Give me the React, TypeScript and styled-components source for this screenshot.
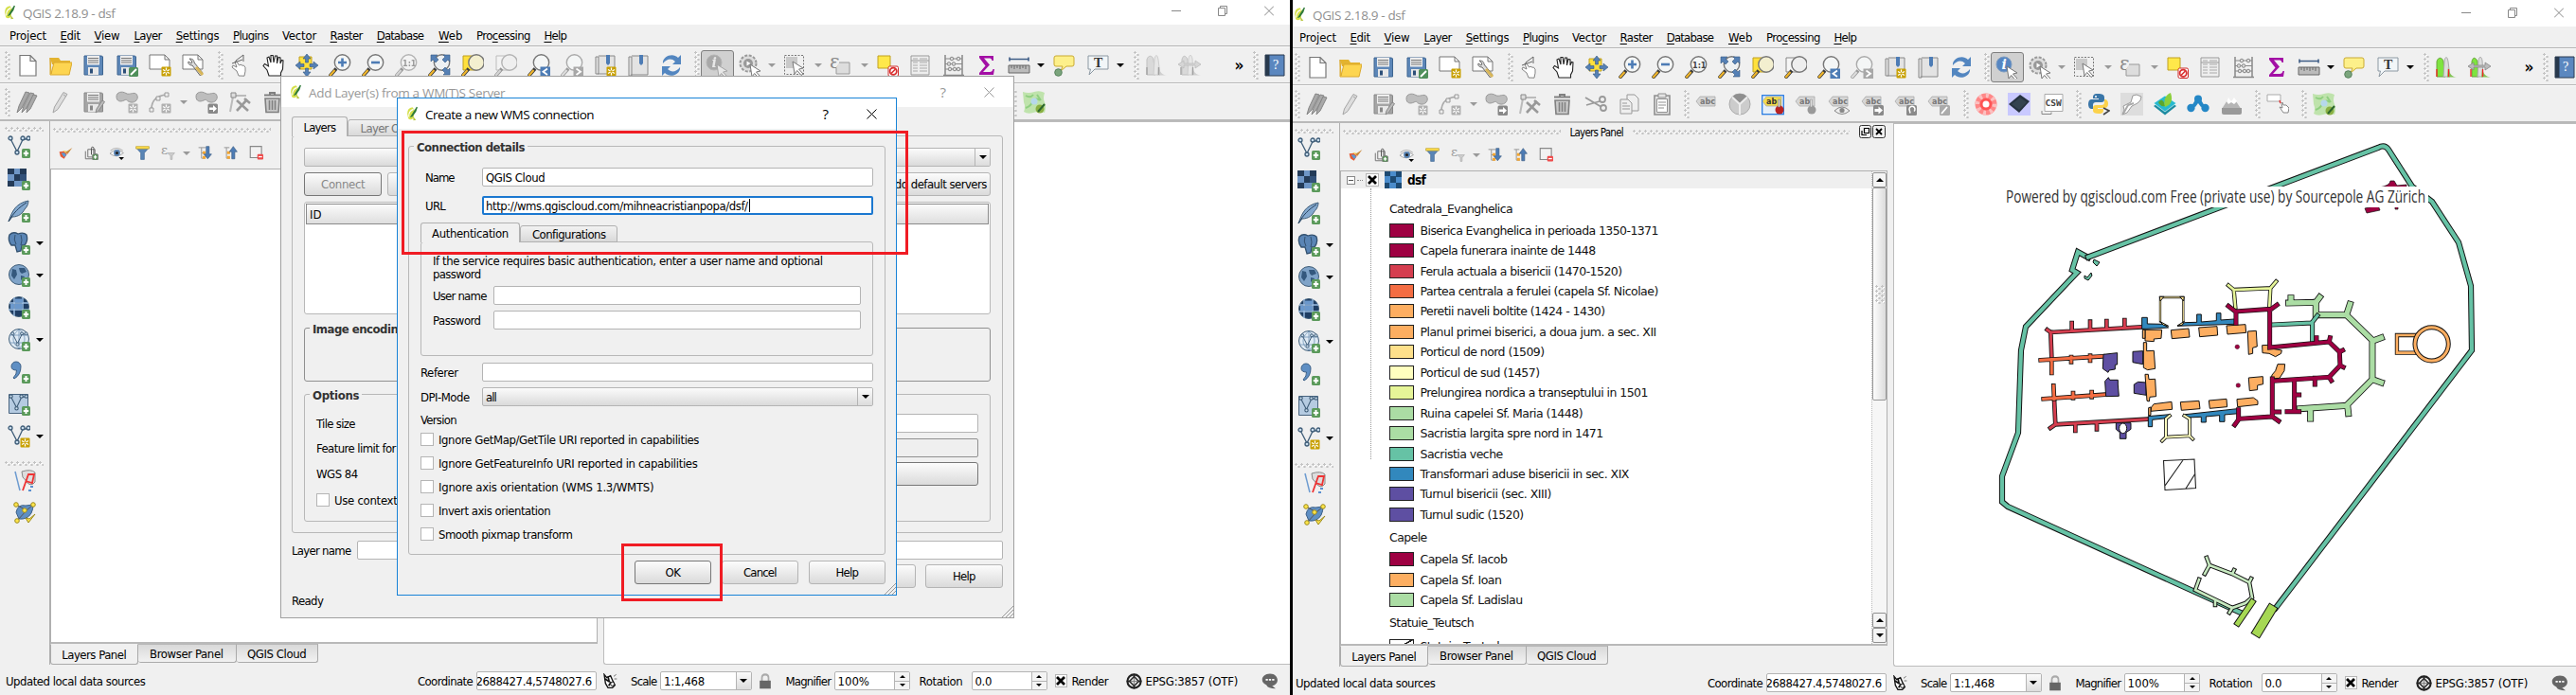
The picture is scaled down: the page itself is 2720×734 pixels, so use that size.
import React, { useLayoutEffect, useRef, useState } from "react";
import styled, { createGlobalStyle, css } from "styled-components";

const Global = createGlobalStyle`
  * { box-sizing: border-box; }
  html, body { margin: 0; padding: 0; background: #fff; overflow: hidden; }
  body { font-family: "DejaVu Sans Condensed", "DejaVu Sans", sans-serif; font-size: 13px; color: #000; line-height: 16px; }
  svg { display: block; flex: none; }
`;

/* ---------- text ---------- */
const TextBox = styled.span<{ $w: number; $size?: number; $bold?: boolean; $color?: string; $font?: string }>`
  display: inline-block;
  flex: none;
  width: ${(p) => p.$w}px;
  padding-top: 1px;
  white-space: pre;
  font-size: ${(p) => p.$size ?? 13}px;
  font-weight: ${(p) => (p.$bold ? 700 : 400)};
  color: ${(p) => p.$color ?? "inherit"};
  ${(p) => p.$font && css`font-family: ${p.$font};`}
`;
const Under = styled.u`
  text-underline-offset: 2px;
  text-decoration-thickness: 1px;
`;

type LabelProps = { w: number; text: string; size?: number; bold?: boolean; color?: string; font?: string };
/* Label with a fixed advance width; "&" marks the mnemonic letter. */
function Label({ w, text, size, bold, color, font }: LabelProps) {
  const ref = useRef<HTMLSpanElement>(null);
  const [spacing, setSpacing] = useState(0);
  const i = text.indexOf("&");
  const plain = text.replace("&", "");
  useLayoutEffect(() => {
    if (ref.current) setSpacing((w - ref.current.offsetWidth) / plain.length);
  }, [w, plain]);
  return (
    <TextBox $w={w} $size={size} $bold={bold} $color={color} $font={font}>
      <span ref={ref} style={{ letterSpacing: spacing }}>
        {i < 0 ? plain : (<>{text.slice(0, i)}<Under>{text[i + 1]}</Under>{text.slice(i + 2)}</>)}
      </span>
    </TextBox>
  );
}
const TITLE_FONT = '"Open Sans", "Noto Sans", sans-serif';

/* ---------- icons ---------- */
const Plus = ({ x = 15, y = 14 }: { x?: number; y?: number }) => (
  <g transform={`translate(${x} ${y})`}>
    <rect width="9" height="10" rx="1.5" fill="#5b9a5b" />
    <path d="M4.5 2v6M1.8 5h5.4" stroke="#fff" strokeWidth="2" />
  </g>
);
const Star = ({ c = "#c8a000" }: { c?: string }) => (
  <g>
    <rect x="13.5" y="13.5" width="10" height="10" rx="1" fill={c} />
    <path d="M18.500 14.500v8M15 16.500l7 4M22 16.500l-7 4" stroke="#fff" strokeWidth="1.300" />
    <circle cx="18.500" cy="18.500" r="1.200" fill={c} />
  </g>
);
const Lens = ({ grey, fill = "#f4f6f6", cx = 14.5, children }: { grey?: boolean; fill?: string; cx?: number; children?: React.ReactNode }) => (
  <g>
    <path d="M1 23.500L8 15.500" stroke={grey ? "#999" : "#3a3a3a"} strokeWidth="3.600" />
    <path d="M1.300 23L6.500 17" stroke={grey ? "#ddd" : "#f0b62c"} strokeWidth="2.200" />
    <circle cx={cx} cy="9" r="8.200" fill={fill} stroke={grey ? "#aaa" : "#777"} strokeWidth="1.400" />
    {children}
  </g>
);
const Cursor = ({ x = 12, y = 10 }: { x?: number; y?: number }) => (
  <path transform={`translate(${x} ${y})`} d="M0 0l11 7-4.500 1 4.500 5-2 1.500-4.300-5-2.700 3.500z" fill="#fff" stroke="#777" strokeWidth="1" />
);
const Tag = ({ text = "abc", color = "#d6d6d6", ink = "#777" }: { text?: string; color?: string; ink?: string }) => (
  <g>
    <path d="M1 9L5 4H21V14H5Z" fill={color} stroke="#aaa" strokeWidth=".8" />
    <text x="5" y="12" fontSize="8" fontWeight="700" fill={ink} fontFamily="DejaVu Sans">{text}</text>
  </g>
);
const Floppy = ({ g }: { g?: boolean }) => (
  <g>
    <path d="M2 2h18.500l1 1v19H2z" fill={g ? "#a5a5a5" : "#5d87b8"} stroke={g ? "#888" : "#3e6590"} />
    <rect x="5" y="2" width="13" height="9.500" fill="#eee" />
    <path d="M6 4.500h11M6 6.800h11M6 9h11" stroke="#777" strokeWidth="1" />
    <rect x="6" y="14" width="11" height="8" fill="#e8e8e8" /><rect x="8" y="15.500" width="3" height="5" fill={g ? "#888" : "#2d4f78"} />
  </g>
);
const VShape = () => (
  <g stroke="#3f5d78" strokeWidth="1.300" fill="#c9dcec">
    <path d="M3 3.500L10 17L16 4.500L21 3.500" fill="none" />
    <circle cx="3" cy="3" r="2" /><circle cx="10" cy="18" r="2" /><circle cx="16" cy="3" r="2" /><circle cx="22" cy="3" r="2" />
  </g>
);
const Blob = () => <path d="M1 6C1 1 7 0 11 2.500S20 0 22.500 4 21 13 16 12 13 8 9 10 1 11 1 6z" fill="#bdbdbd" stroke="#999" />;
const Hand = ({ thin }: { thin?: boolean }) => thin ? (
  <g fill="#fff" stroke="#777" strokeWidth=".9">
    <path d="M10 23l-2-5-5-4 1-2 4 2-2-6 1.500-.5 3 4.500 1.500-.8 2 1 1.500 0 1.500 2 0 4-1 5z" />
    <path d="M7 7l8-6v7M14 6l-11 4" fill="none" stroke="#555" />
  </g>
) : (
  <path d="M7 23L5 17 1 12.500l1.500-2L6.500 13 5 4l2-1 2 6L9 1.500h2.200L12 9l1.500-7h2v8L17 3.500l2 .5v6l1.500-3.500 1.500.5-.5 9-2 4v3z" fill="#fff" stroke="#222" strokeWidth="1.100" />
);
const Arrows = () => (
  <g fill="#5580b5" stroke="#36597f" strokeWidth=".6">
    <path d="M12 0l4 5h-2.500v4h-3V5H8z" /><path d="M12 24l4-5h-2.500v-4h-3v4H8z" />
    <path d="M0 12l5-4v2.500h4v3H5V16z" /><path d="M24 12l-5-4v2.500h-4v3h4V16z" />
  </g>
);
const Globe = ({ dark, light }: { dark?: boolean; light?: boolean }) => (
  <g>
    <circle cx="12" cy="11" r="10.500" fill={dark ? "#1f3d63" : light ? "#dfeaf4" : "#7fa3c8"} stroke="#3f5d78" />
    {dark ? <path d="M2 7h20M1 14h22M7 1v20M16 1v20" stroke="#9fc0e4" strokeWidth="1.400" /> : light ? (
      <path d="M2 7h20M2 15h20M12 1v20M12 1c-8 6-8 14 0 20M12 1c8 6 8 14 0 20" stroke="#6f93b5" strokeWidth=".8" fill="none" />
    ) : <path d="M5 5l4 1 1 5-3 5-3-4zM12 4l6 0 2 4-5 2-2-2zM14 12l4 1-2 5-2-2z" fill="#34587d" />}
    {dark && <path d="M8 2.500h8v4H8zM3 8h4v5H3zM8 8h7.500v5H8z" fill="#6b98cc" />}
  </g>
);

const ART: Record<string, React.ReactNode> = {
  doc: <path d="M4 1.500h11l6 6V23H4z M15 1.500v6h6" fill="#fff" stroke="#777" strokeWidth="1.200" />,
  open: <g><path d="M1 4h9l2 3h10v4H3z" fill="#e3b32f" /><path d="M1 4v18h20l3-13H5l-3 12z" fill="#fdd551" stroke="#dba92e" /></g>,
  save: <Floppy />,
  saveas: <g><Floppy /><rect x="14" y="14" width="10" height="10" rx="1.500" fill="#4f8f5a" /><path d="M16 22l6-6" stroke="#fff" strokeWidth="2" /></g>,
  composer: <g><path d="M1 1h16l5 5v10H1z M17 1v5h5" fill="#fff" stroke="#777" /><Star /></g>,
  manager: <g><path d="M1 1h16l5 5v10H1z M17 1v5h5" fill="#fff" stroke="#777" /><path d="M8 5c4 0 5 2 5 4l9 11-2.500 3L11 12c-3 0-5-2-4-4l3 2 1-2z" fill="#ddd" stroke="#666" /><path d="M15 14l7 8" stroke="#d9b75a" strokeWidth="3" /></g>,
  touch: <Hand thin />,
  pan: <Hand />,
  pansel: <g><path d="M4 3h13v13H4z" fill="#ffe03c" stroke="#c0a020" /><Arrows /></g>,
  zin: <Lens><path d="M14.500 4.500v9M10 9h9" stroke="#4d7cb5" strokeWidth="2.600" /></Lens>,
  zout: <Lens><path d="M10 9h9" stroke="#4d7cb5" strokeWidth="2.600" /></Lens>,
  z11: <Lens><text x="8" y="12.500" fontSize="9" fontWeight="700" fill="#444" fontFamily="DejaVu Sans Condensed">1:1</text></Lens>,
  zfull: <g><Lens fill="#eef1f3" /><path d="M3 1h7L8 3l3 3-3 3-3-3-2 2zM23 1h-7l2 2-3 3 3 3 3-3 2 2zM23 22v-7l-2 2-3-3-3 3 3 3-2 2z" fill="#5580b5" stroke="#36597f" strokeWidth=".6" /></g>,
  zsel: <g><path d="M2 2h13v15H2z" fill="#ffe03c" stroke="#c0a020" /><Lens fill="#f3efcf" cx={16} /></g>,
  zlay: <g><path d="M2 2h13v15H2z" fill="#f6f6f6" stroke="#888" /><Lens fill="#eee" cx={16} /></g>,
  zlast: <g><Lens /><path d="M13.500 13.500h10.500v10.500H13.500z" fill="#4d7cb5" /><path d="M21 15.500l-4.500 3.200 4.500 3.300" fill="none" stroke="#fff" strokeWidth="1.800" /></g>,
  znext: <g><Lens grey /><path d="M13.500 13.500h10.500v10.500H13.500z" fill="#a8a8a8" /><path d="M16.500 15.500l4.500 3.200-4.500 3.300" fill="none" stroke="#fff" strokeWidth="1.800" /></g>,
  book1: <g><path d="M2 3h3v18H2zM5 2h17v19H4" fill="#e3e3e3" stroke="#888" /><path d="M13 1h4v9l-2 2-2-2z" fill="#4d7cb5" /><Star /></g>,
  book2: <g><path d="M2 3h3v20H2zM5 2h17v20H4" fill="#e3e3e3" stroke="#888" /><path d="M13 1h4v9l-2 2-2-2z" fill="#4d7cb5" /></g>,
  refresh: <g fill="#5386c0"><path d="M3 10C2 3 13-2 19 4l3-3v10H13l3-3C12 4 7 5 3 10z" /><path d="M21 14c1 7-10 12-16 6l-3 3V13h9l-3 3c4 4 9 3 13-2z" /></g>,
  identify: <g><circle cx="9" cy="9" r="8" fill="#5686c2" stroke="#7d9cc0" /><text x="6.500" y="14" fontSize="14" fontStyle="italic" fontWeight="700" fill="#fff" fontFamily="DejaVu Serif">i</text><Cursor x={12} y={11} /></g>,
  gear: <g><circle cx="11" cy="10" r="8.500" fill="#ddd" stroke="#999" strokeWidth="2" strokeDasharray="3 1.500" /><circle cx="11" cy="10" r="5" fill="#999" /><path d="M9.500 7.500l4 2.500-4 2.500z" fill="#fff" /><Cursor x={13} y={11} /></g>,
  select: <g><path d="M1.500 1.500h20v20h-20z" fill="none" stroke="#777" strokeDasharray="2 1.500" /><path d="M3 3h12v12H3z" fill="#c9c9c9" /><Cursor x={10} y={8} /></g>,
  eps: <g><text x="0" y="15" fontSize="21" fill="#888" fontFamily="DejaVu Serif">ε</text><path d="M10 9h11v12H7v-6" fill="#ddd" stroke="#999" /></g>,
  desel: <g><path d="M2 2h13v13H2z" fill="#ffe84a" stroke="#c0a020" /><rect x="13" y="13" width="10.500" height="10.500" rx="1.500" fill="#fff" stroke="#cf2c2c" /><circle cx="18.200" cy="18.200" r="3.600" fill="#fff" stroke="#d93030" strokeWidth="1.800" /><path d="M16 20.500l4.500-4.500" stroke="#d93030" strokeWidth="1.600" /></g>,
  table: <g><path d="M2 2h19v20H2z" fill="#eee" stroke="#999" /><path d="M4 5h5M11 5h8M4 9h5M11 9h8M4 12h5M11 12h8M4 15h5M11 15h8M4 18h5M11 18h8" stroke="#aaa" strokeWidth="1.200" /><path d="M2 7h19" stroke="#999" /></g>,
  abacus: <g fill="#ddd" stroke="#888"><path d="M3 1v21M21 1v21M1 22.500h22" strokeWidth="1.500" /><path d="M3 5h18M3 10.500h18M3 16h18" /><circle cx="10" cy="5" r="1.800" /><circle cx="17" cy="5" r="1.800" /><circle cx="7" cy="10.500" r="1.800" /><circle cx="12" cy="10.500" r="1.800" /><circle cx="8" cy="16" r="1.800" /><circle cx="13" cy="16" r="1.800" /><circle cx="17" cy="16" r="1.800" /></g>,
  sigma: <path d="M4 2h15v5h-1.500C17 5 16 4.500 14 4.500H9l6 7-7 7.500h7c2 0 3-1 3.500-3H20l-1 6H4v-2l6.500-7.500L4 4z" fill="#a30fa5" />,
  ruler: <g><path d="M2 5.500h20M2 3.500v4M22 3.500v4" stroke="#3f5d86" strokeWidth="1.600" /><path d="M1 12h22v8H1z" fill="#bbb" stroke="#666" /><path d="M4 12v3M7 12v4M10 12v3M13 12v4M16 12v3M19 12v4" stroke="#666" /></g>,
  tip: <g><path d="M4 2h17q2 0 2 2v7q0 2-2 2h-6l-6 5 2-5H4q-2 0-2-2V4q0-2 2-2z" fill="#fdf08a" stroke="#c9aa32" /><circle cx="6.500" cy="19.500" r="3.800" fill="#7ba57d" stroke="#55805a" /></g>,
  text: <g><path d="M2 2h21v14H9l-6 6 1.500-6H2z" fill="#f2f6f8" stroke="#8c98a2" /><text x="8" y="14" fontSize="14" fill="#333" fontFamily="Liberation Serif" fontWeight="700">T</text></g>,
  hist: <g><path d="M2 22V6C3 1 8 1 9 6l2 16z" fill="#7ee43f" stroke="#6aa33e" /><path d="M9 22l1-16c1-6 3-6 4 0l2 16z" fill="#ddd" stroke="#aaa" /><path d="M14 12c1 6 3 10 9 10.500H13z" fill="#82c455" /><path d="M2 14v8M14.500 14v8" stroke="#f32222" strokeWidth="1.300" /></g>,
  hist2: <g><path d="M4 22V6C5 1 8 1 10 6l1 16z" fill="#7ee43f" stroke="#6aa33e" /><path d="M10 22l1-17c1-5 3-5 4 0l1 17z" fill="#ddd" stroke="#aaa" /><path d="M15 14c1 5 4 8 9 8.500H14z" fill="#82c455" /><path d="M3 14v8M15.500 14v8" stroke="#f32222" strokeWidth="1.300" /><path d="M0 11l6-4v3h12V7l6 4-6 4v-3H6v3z" fill="#bbb" stroke="#888" strokeWidth=".8" /></g>,
  help: <g><path d="M2 1h20v22H2z" fill="#5b87bf" stroke="#2a3b50" /><path d="M2 1h4.500v22H2z" fill="#28394d" /><text x="10" y="16" fontSize="14" fill="#fff" fontFamily="Liberation Serif">?</text></g>,
  pencils: <g fill="#a9a9a9" stroke="#858585"><path d="M1 23l2-7L10 1l4 1L6 18z" /><path d="M6 23l2-7 7-14 4 1-8 15z" /><path d="M11 23l1-6 6-13 4 1-7 14z" /></g>,
  pencil: <path d="M4 23l1.500-6L15 1.500l4 2L9 19.500z M15 4l3 2" fill="#ddd" stroke="#a5a5a5" />,
  esave: <g><Floppy g /><path d="M14 23l1-4 6-9 2.500 1.500-6 9z" fill="#bbb" stroke="#888" /></g>,
  addf: <g><Blob /><Star c="#b0b0b0" /></g>,
  curve: <g><path d="M3 19C3 9 9 5 19 4" fill="none" stroke="#aaa" strokeWidth="1.600" /><path d="M1 18h4v4H1zM8 6h4v4H8zM17 2h4v4h-4z" fill="#eee" stroke="#999" /><Star c="#b0b0b0" /></g>,
  movef: <g><Blob /><rect x="13.500" y="13.500" width="10.500" height="10.500" rx="1.500" fill="#888" /><path d="M15 17.500h4v-2.500l4 3.800-4 3.700V20h-4z" fill="#fff" /></g>,
  node: <g><path d="M4 5h15M5 6L2 22" stroke="#bbb" strokeWidth="2" /><path d="M3 2h5v5H3z" fill="#ddd" stroke="#888" /><path d="M9 10l12 11M20 9L9 21" stroke="#999" strokeWidth="2.600" /><path d="M17 8l6 5" stroke="#999" strokeWidth="2.500" /></g>,
  trash: <g fill="none" stroke="#808080"><path d="M4 8h15l-1 14.500H5z" fill="#c9c9c9" strokeWidth="1.600" /><path d="M3 4.500h17M9 4V2h5v2" strokeWidth="2" /><path d="M8.500 10v10M11.500 10v10M14.500 10v10" strokeWidth="1.600" /></g>,
  cut: <g fill="none" stroke="#999" strokeWidth="1.800"><path d="M1 5l17 10M2 13l14-4" /><circle cx="19" cy="7" r="3" /><circle cx="20" cy="16" r="3" /></g>,
  copy: <g fill="#efefef" stroke="#999"><path d="M10 2h8l4 4v13H10z" /><path d="M3 7h8l4 4v11H3z" /><path d="M5 11h5M5 14h8M5 17h8" /></g>,
  paste: <g fill="#e4e4e4" stroke="#8f8f8f"><path d="M4 3h16v20H4z" strokeWidth="1.600" /><path d="M8 1h8v4H8z" /><path d="M6.500 6.500h11v14h-11z" fill="#fff" /><path d="M8 10h8M8 13h8M8 16h6" /></g>,
  abc: <Tag />,
  pie: <g><circle cx="12" cy="12" r="11" fill="#ccc" stroke="#aaa" /><path d="M12 12L4 4.500A11 11 0 0 1 20 4.500z" fill="#8f8f8f" /><path d="M12 12v11M12 12L4 4.500M12 12l8-7.500" stroke="#eee" strokeWidth="2" /></g>,
  lab1: <g><rect x=".7" y="2.700" width="22.600" height="20" fill="#e5eef8" stroke="#1a73e0" strokeWidth="1.200" /><Tag text="ab" color="#f3dc4a" ink="#333" /><circle cx="19" cy="18" r="4.500" fill="#b92222" /><path d="M17.500 7h2v8h-2z" fill="#ddd" stroke="#777" strokeWidth=".6" /></g>,
  lab2: <g><Tag text="ab" /><circle cx="18" cy="18" r="4.500" fill="#999" /><path d="M16.500 7h2v8h-2z" fill="#ddd" stroke="#999" strokeWidth=".6" /></g>,
  lab3: <g><Tag /><path d="M7 19q8-8 16 0-8 7-16 0z" fill="#eee" stroke="#888" /><circle cx="15" cy="18.500" r="2.600" fill="#888" /></g>,
  lab4: <g><Tag /><rect x="13" y="13" width="11" height="11" rx="1.500" fill="#8a8a8a" /><path d="M14.500 17h4v-2.500l4.500 4-4.500 4V20h-4z" fill="#fff" /></g>,
  lab5: <g><Tag /><rect x="13" y="13" width="11" height="11" rx="1.500" fill="#8a8a8a" /><path d="M17 21.500l-1-4a3 3 0 1 1 5 2" fill="none" stroke="#fff" strokeWidth="1.500" /></g>,
  lab6: <g><Tag /><rect x="13" y="13" width="11" height="11" rx="1.500" fill="#aaa" /><path d="M15 22l6-7" stroke="#fff" strokeWidth="1.800" /></g>,
  ring: <g><circle cx="12" cy="12" r="8" fill="#fff" stroke="#f88" strokeWidth="7" /><circle cx="12" cy="12" r="9" fill="none" stroke="#fbc0c0" strokeWidth="5" strokeDasharray="3 4" /><circle cx="12" cy="12" r="5" fill="none" stroke="#f55" strokeWidth="3" /></g>,
  chip: <g><path d="M0 0h24v24H0z" fill="#c9c9ff" /><path d="M1 12L13 2l10 7-11 12z" fill="#26323f" /><path d="M4 12l9-7 7 5-8 8z" fill="#34434f" /></g>,
  csw: <g><path d="M4 1.500h19v18H4z" fill="#fff" stroke="#aaa" /><path d="M1 19v3.500h10v-2" fill="none" stroke="#888" /><text x="4.500" y="13.500" fontSize="9.500" fontWeight="700" fill="#444" fontFamily="DejaVu Sans Mono">CSW</text></g>,
  python: <g><path d="M11 1c-5 0-5 2-5 5h6v1H4c-4 0-4 10 0 10h2v-4c0-2 1-3 3-3h6c2 0 3-1 3-3V5c0-3-2-4-7-4z" fill="#3a76a8" /><path d="M12 22c5 0 5-2 5-5h-6v-1h8c4 0 4-9 0-9h-1v3c0 2-1 3-3 3H9c-2 0-3 1-3 3v3c0 2 2 3 6 3z" fill="#fcd24b" /><path d="M17 16l6 3-6 4" fill="none" stroke="#444" strokeWidth="1.600" /><circle cx="9" cy="4" r="1" fill="#fff" /></g>,
  grass: <g><path d="M0 0h24v24H0z" fill="#ddd" /><path d="M13 3l4-1 5 2-1 4-3 3-6 3-5 7-5 2 2-5-1-4 8-4z" fill="#fff" stroke="#999" /><path d="M3 22l5-9 6-2" fill="none" stroke="#aaa" strokeWidth="2" /></g>,
  leaf: <g><path d="M0 14l12-8 12 8-12 9.500z" fill="#1d8ba0" /><path d="M0 11L12 3l12 8-12 9z" fill="#27b9cf" stroke="#fff" strokeWidth=".6" /><path d="M5 10q5-6 7 4-5 1-7-4z" fill="#5ba62e" /><path d="M12 15Q9 4 18 0q4 12-6 15z" fill="#8ccf3c" /></g>,
  people: <g fill="#2487c6"><circle cx="12" cy="6.500" r="4" /><circle cx="4.500" cy="16" r="4.200" /><circle cx="19.500" cy="16" r="4.200" /><path d="M5 14l5-8h4l5 8-4 1-3-4-3 4z" /></g>,
  mount: <g><path d="M2 17L9 6l3 4 3-4 8 12v1H2z" fill="#b5b5b5" /><path d="M2 16h21v5q0 2-2 2H4q-2 0-2-2z" fill="#999" /><path d="M7 9l2-4 3 4 3-4 3 4-3 3-3-2-3 2z" fill="#fff" /></g>,
  recth: <g><path d="M1 2h14v7H1z" fill="#fff" stroke="#aaa" /><path d="M14 8l1 3" stroke="#d33" strokeWidth="1.500" /><path d="M16 11l1 5-3-1 4 6h5l1-5-3-3-3 0-1-3z" fill="#fff" stroke="#888" /></g>,
  cloud: <g><path d="M0 1q6 2 12 0t11 1q-2 6 0 10t0 11q-6-2-12 0T1 22q2-5 0-10z" fill="#bfe3ac" /><path d="M3 5q5 3 8-1M15 4l4 6M3 18q6-2 8-8 4-3 7 0" stroke="#8fcf80" fill="none" strokeWidth="2" /><circle cx="12" cy="11" r="3.500" fill="#b6d8ec" /><circle cx="18" cy="19" r="4.500" fill="#8ab043" /><path d="M16 22l7-8" stroke="#2c662c" strokeWidth="2" /></g>,
  vadd: <g><VShape /><Plus /></g>,
  radd: <g><path d="M0 1h20v19H0z" fill="#6f96c6" /><path d="M0 1h7v6H0zM13 1h7v6h-7zM7 7h6v7H7zM0 14h7v6H0z" fill="#243b58" /><path d="M13 7h7v7h-7z" fill="#34527a" /><Plus /></g>,
  feather: <g><path d="M1 23C5 12 8 4 22 1c0 5-3 8-4 9-2 4-6 8-13 8z" fill="#84a9cf" stroke="#3f5d78" /><path d="M1 23C6 14 12 8 20 3" stroke="#28425e" fill="none" /><Plus /></g>,
  pg: <g><path d="M2 3q4-4 9-1 6-2 9 1 2 6-2 11h-3l-1 6-4 1-2-7H4Q0 9 2 3z" fill="#5a85b5" stroke="#33516f" strokeWidth="1.300" /><path d="M8 3q-2 5 1 10M14 3q2 6 0 11" stroke="#33516f" fill="none" /><Plus y={14} /></g>,
  globe: <g><Globe /><Plus y={14} /></g>,
  globe2: <g><Globe dark /><Plus y={14} /></g>,
  globe3: <g><Globe light /><g transform="translate(3 3) scale(.75)"><VShape /></g><Plus y={14} /></g>,
  comma: <g><path d="M4 6a4.500 4.500 0 1 1 10 0q0 9-7 13l-1-1q4-4 3.500-8Q4 10 4 6z" fill="#5f8fc4" stroke="#3c6087" /><Plus /></g>,
  vbox: <g><path d="M1.500 1.500h20v20h-20z" fill="#b5cbe1" stroke="#48637e" /><g transform="translate(1 1) scale(.85)"><VShape /></g><Plus /></g>,
  vstar: <g><VShape /><Star /></g>,
  topo: <g fill="none"><path d="M2 2l5 20" stroke="#6d9bd0" strokeWidth="1.500" /><path d="M9 2q10-3 14 1v10q-4 5-8 1-2-3-5-6z" fill="#ddd" stroke="#888" /><path d="M10 22l6-17 6 0-2 9-7-2" stroke="#e33" strokeWidth="1.800" /><path d="M16 22h3M18 18h3" stroke="#5a8fd0" strokeWidth="2" /></g>,
  geom: <g><path d="M3 11q2-9 10-7l8-1q0 5-2 9-4 7-13 6z" fill="#5f8fc4" stroke="#3c6087" /><path d="M4 20L14 9 21 3M3 3l11 6" stroke="#555" fill="none" /><g fill="#ffe54a" stroke="#9b8b20"><circle cx="3" cy="3" r="2.300" /><circle cx="21" cy="3" r="2.300" /><circle cx="12" cy="9" r="2.300" /><circle cx="4" cy="20" r="2.300" /><path d="M13 17l3 5 7-9-6 5z" /></g></g>,
  brush: <g><path d="M1 10l8-1 5 5-5 8-6-4z" fill="#e8582f" /><path d="M4 12l6 0 3 4-4 3z" fill="#5b9bd5" /><path d="M7 8l5 4 2-3z" fill="#f7d24a" /><path d="M11 11l4 3 8-11z" fill="#c98a3d" /></g>,
  group: <g fill="none" stroke="#777" strokeWidth="1.600"><path d="M2 9v13h12M6 6v13h12V6z" /><path d="M12 15V4a2 2 0 0 1 4 0v9" stroke="#555" /><Plus x={14} y={14} /></g>,
  eye: <g><path d="M0 13Q11 2 23 12 11 22 0 13z" fill="#fff" stroke="#999" strokeWidth="1.400" /><circle cx="12" cy="12" r="5.500" fill="#5a85b5" /><circle cx="12" cy="12" r="2.500" fill="#222" /><path d="M1 8Q11 0 22 8" fill="none" stroke="#888" /><path d="M15 19h9l-4.500 5z" fill="#000" /></g>,
  funnel: <g><path d="M1 3h22l-8 9v11H9V12z" fill="#5a85b5" stroke="#3f6590" /><path d="M1 1h22v4H1z" fill="#ffdf4a" stroke="#bca030" /></g>,
  epsf: <g><text x="0" y="14" fontSize="22" fill="#999" fontFamily="DejaVu Serif">ε</text><path d="M11 12h12l-4 5v6h-3v-6z" fill="#ccc" stroke="#aaa" /></g>,
  down: <g><path d="M1 3h12M6 3v18h6M6 12h5" stroke="#999" strokeWidth="1.600" fill="none" /><path d="M8 9h5v5H8zM8 17h5v5H8z" fill="#f5a732" /><path d="M14 1h5v13h4l-6.500 8L10 14h4z" fill="#4d7cb5" stroke="#36597f" /></g>,
  up: <g><path d="M1 3h9M5 3v18h6M6 12h5" stroke="#999" strokeWidth="1.600" fill="none" /><path d="M6 9h5v5H6zM6 17h5v5H6z" fill="#f5a732" /><path d="M14 22h5V10h4l-6.500-9L10 10h4z" fill="#4d7cb5" stroke="#36597f" /></g>,
  remove: <g><path d="M2 1h19v19H2z" fill="#f2f2f2" stroke="#888" strokeWidth="1.800" /><rect x="14" y="14" width="10" height="9" rx="1.500" fill="#ee4b4b" /><path d="M16 18.500h6" stroke="#fff" strokeWidth="2" /></g>,
  logo: <g><path d="M2 12Q2 3 12 2l4 4-2 13q-6 4-10 1z" fill="#d5e04a" /><path d="M5 17Q4 8 14 5" stroke="#fff" fill="none" strokeWidth="2" /><path d="M7 18L20 1l2 1-3 7-7 8z" fill="#2f7a3a" /><path d="M13 16l6 6-5 1z" fill="#b9c640" /></g>,
  mouse: <g><path d="M3 2l4 5 6-3 4 9 3 6-4 4H9L5 16z" fill="#fff" stroke="#111" strokeWidth="2" /><path d="M4 9l8 5M9 5l2 9M14 14l-4 6" stroke="#111" strokeWidth="2.600" /><circle cx="16" cy="17" r="3" fill="#fff" stroke="#111" strokeWidth="1.500" /><path d="M18 5l4-3M19 9h4" stroke="#333" /></g>,
  lock: <g><path d="M6 12V7q0-5 6-5t6 5v5" fill="none" stroke="#aaa" strokeWidth="3" /><path d="M2 11h20v12H2z" fill="#666" /></g>,
  crs: <g fill="none" stroke="#222"><circle cx="12" cy="12" r="10" strokeWidth="3" /><path d="M12 1v6M12 17v6M1 12h6M17 12h6" strokeWidth="2" /><path d="M12 5l7 7-7 7-7-7z" fill="#ddd" strokeWidth="2" /><path d="M12 7v10M7 12h10" stroke="#777" strokeWidth="1.200" /></g>,
  chat: <g><path d="M12 2c13 0 14 16 3 17l5 4Q9 23 7 18C-3 14 0 2 12 2z" fill="#666" /><path d="M6 10.500h3M10.500 10.500h3M15 10.500h3" stroke="#fff" strokeWidth="2.500" /></g>,
};

const IconSvg = styled.svg<{ $off?: boolean }>`
  ${(p) => p.$off && css`filter: grayscale(1) opacity(0.5);`}
`;
const Icon = ({ name, size = 24, h, off }: { name: string; size?: number; h?: number; off?: boolean }) => (
  <IconSvg width={size} height={h ?? size} viewBox="0 0 24 24" preserveAspectRatio="none" $off={off}>{ART[name]}</IconSvg>
);
const Caret = styled.i<{ $c?: string; $s?: number; $up?: boolean }>`
  width: 0;
  height: 0;
  border: ${(p) => p.$s ?? 4.5}px solid transparent;
  ${(p) => p.$up
    ? css`border-bottom-color: #000; border-top-width: 0;`
    : css`border-top-color: ${p.$c ?? "#000"}; border-bottom-width: 0;`}
`;

/* ---------- window frame ---------- */
const Screen = styled.main`display: flex; width: 2720px; height: 734px; overflow: hidden;`;
const Half = styled.section<{ $right?: boolean }>`
  position: relative;
  width: ${(p) => (p.$right ? 1358 : 1362)}px;
  height: 734px;
  overflow: hidden;
  background: #fff;
  ${(p) => p.$right && css`border-left: 3px solid #000; padding-top: 2px;`}
`;
const Win = styled.div<{ $right?: boolean }>`
  width: 1362px;
  height: 734px;
  margin-left: ${(p) => (p.$right ? -3 : 0)}px;
  display: flex;
  flex-direction: column;
  background: #f0f0f0;
`;
const TitleBar = styled.header`
  height: 26px;
  flex: none;
  display: flex;
  align-items: center;
  gap: 7px;
  padding: 0 17px 0 4px;
  background: #fff;
`;
const Push = styled.div`flex: 1;`;
const Controls = styled.div<{ $gap: number; $up?: number }>`
  display: flex;
  gap: ${(p) => p.$gap}px;
  align-items: center;
  padding-bottom: ${(p) => p.$up ?? 0}px;
`;
const MenuBar = styled.nav`
  height: 23px;
  flex: none;
  display: flex;
  align-items: center;
  padding: 0 0 0 10px;
  border-bottom: 1px solid #b4b4b4;
`;
const MenuItem = styled.span<{ $slot: number }>`width: ${(p) => p.$slot}px; flex: none;`;
const ToolRow = styled.div<{ $last?: boolean }>`
  height: ${(p) => (p.$last ? 40 : 39)}px;
  flex: none;
  display: flex;
  align-items: center;
  border-top: 1px solid #fafafa;
  border-bottom: ${(p) => (p.$last ? 2 : 1)}px solid #b9b9b9;
`;
const Slot = styled.span<{ $w: number; $active?: boolean; $end?: boolean }>`
  width: ${(p) => p.$w}px;
  height: 32px;
  flex: none;
  display: flex;
  align-items: center;
  justify-content: ${(p) => (p.$end ? "flex-end" : "center")};
  ${(p) => p.$active && css`background: #d0d0d0; border: 1px solid #7e7e7e; border-radius: 3px;`}
`;
const dots = css`
  background-image: radial-gradient(circle at 1.5px 1.5px, #c3c3c3 1px, transparent 1.3px),
    radial-gradient(circle at 2.5px 2.5px, #fff 1px, transparent 1.3px),
    radial-gradient(circle at 4.5px 4px, #c3c3c3 1px, transparent 1.3px);
  background-size: 6px 5px;
`;
const Grip = styled.i`width: 6px; height: 30px; margin-right: 1px; ${dots}`;
const GripBar = styled.i<{ $w?: number; $h?: number }>`
  display: block;
  height: ${(p) => p.$h ?? 5}px;
  ${(p) => (p.$w ? css`width: ${p.$w}px;` : css`flex: 1;`)}
  ${dots}
`;
const More = styled.span`font-size: 17px; font-weight: 700; line-height: 20px;`;

const MENU: [string, number, number][] = [
  ["Pro&ject", 39, 53.5], ["&Edit", 21.5, 36], ["&View", 27, 42], ["&Layer", 29.5, 44.2], ["&Settings", 45.5, 60.3],
  ["&Plugins", 37.5, 52], ["Vect&or", 36, 50.6], ["&Raster", 34.500, 49.2], ["&Database", 49.5, 65.2], ["&Web", 25, 40], ["Pro&cessing", 56.5, 71.5], ["&Help", 24, 30],
];
type Tool = [string, number];
const ROW1: Tool[] = [
  ["|", 11.5], ["doc", 35], ["open", 35], ["save", 35], ["saveas", 35], ["composer", 35], ["manager", 35], ["|", 15],
  ["touch", 35], ["pan", 35], ["pansel", 35], ["zin", 35], ["zout", 35], ["z11", 35], ["zfull", 35], ["zsel", 35], ["zlay", 35],
  ["zlast", 35], ["znext", 35], ["book1", 35], ["book2", 35], ["refresh", 35], ["|", 13], ["identify", 35], ["gear", 33], ["-", 14],
  ["select", 35], ["-", 14], ["eps", 35], ["-", 14], ["desel", 35], ["table", 35], ["abacus", 35], ["sigma", 35], ["ruler", 33], ["v", 13],
  ["tip", 35], ["text", 36], ["v", 12], ["|", 15], ["hist", 35], ["hist2", 35], [" ", 25], [">>", 20], ["|", 11], ["help", 33],
];
const ROW2: Tool[] = [
  ["|", 11.5], ["pencils", 35], ["pencil", 35], ["esave", 35], ["addf", 35], ["curve", 35], ["-", 14], ["movef", 35], ["node", 35],
  ["trash", 35], ["cut", 35], ["copy", 35], ["paste", 35], ["|", 12], ["abc", 35], ["pie", 35], ["lab1", 35], ["lab2", 35], ["lab3", 35],
  ["lab4", 35], ["lab5", 35], ["lab6", 35], ["|", 15], ["ring", 35], ["chip", 35], ["csw", 35], ["|", 14], ["python", 35], ["grass", 35],
  ["leaf", 35], ["people", 35], ["mount", 35], ["|", 14], ["recth", 35], ["|", 14], ["cloud", 35],
];
const renderTools = (tools: Tool[], off: string[]) =>
  tools.map(([n, w], i) => (
    <Slot key={i} $w={w} $active={n === "identify"} $end={n === "|"}>
      {n === "|" ? <Grip /> : n === "-" ? <Caret $c="#999" /> : n === "v" ? <Caret /> : n === ">>" ? <More>»</More> : n === " " ? null : (
        <Icon name={n} off={off.includes(n)} />
      )}
    </Slot>
  ));

const Body = styled.div`display: flex; height: 574px; flex: none;`;
const SideBar = styled.aside`width: 53px; border-right: 1px solid #b0b0b0; padding-top: 5px;`;
const SideItem = styled.div<{ $in?: boolean; $h?: number }>`
  display: flex;
  align-items: center;
  height: ${(p) => p.$h ?? 34}px;
  padding-left: ${(p) => (p.$in ? 14 : 8)}px;
  gap: 6px;
`;
const SideGrip = styled.div`padding: 1px 0 0 5px; height: 5px;`;
const Dock = styled.div`width: 578px; display: flex; flex-direction: column;`;
const DockHead = styled.div`height: 17px; display: flex; align-items: center; gap: 10px; padding: 1px 2px 0 3px;`;
const DockBtns = styled.div`display: flex; gap: 1px;`;
const DockTools = styled.div`height: 33px; display: flex; align-items: center; padding-left: 2.5px;`;
const Tree = styled.div`
  height: 502px;
  border: 1px solid #b0b0b0;
  border-bottom: 2px solid #b9b9b9;
  background: #fff;
  display: flex;
  overflow: hidden;
`;
const TreeMain = styled.div`flex: 1; overflow: hidden;`;
const LayerRow = styled.div`height: 18px; background: #efefef; display: flex; align-items: center; padding-left: 6px;`;
const Expander = styled.i`
  width: 9px; height: 9px; border: 1px solid #888; background: linear-gradient(#555, #555) center / 5px 1px no-repeat #fff;
`;
const Dash = styled.i`width: 6px; margin: 0 3px 0 2px; border-top: 1px dotted #888;`;
const Check = styled.span<{ $size?: number }>`
  width: ${(p) => p.$size ?? 14}px;
  height: 14px;
  flex: none;
  border: 1px solid #b5b5b5;
  background: #fff;
  display: grid;
  place-items: center;
`;
const Cross = () => (<svg width="10" height="10" viewBox="0 0 10 10"><path d="M1 1l8 8M9 1L1 9" stroke="#000" strokeWidth="2.800" /></svg>);
const Legend = styled.div`
  margin-left: 31px;
  border-left: 1px dotted #999;
  height: 286px;
  padding-left: 19px;
`;
const GroupName = styled.div<{ $t: number }>`height: 16px; margin-top: ${(p) => p.$t}px; white-space: nowrap;`;
const LegendRow = styled.div`
  height: 21.450px;
  display: flex;
  align-items: center;
  gap: 7px;
  white-space: nowrap;
`;
const Swatch = styled.i<{ $c: string }>`width: 25.500px; height: 15px; flex: none; border: 1px solid #222; background: ${(p) => p.$c};`;
const Entries = styled.div<{ $t: number }>`margin-top: ${(p) => p.$t}px;`;
const ScrollBar = styled.div`width: 16px; display: flex; flex-direction: column; background: #f6f6f6; border-left: 1px dotted #bbb; padding: 1px 0;`;
const ScrollBtn = styled.span`height: 16px; border: 1px solid #909090; border-radius: 2px; background: #f4f4f4; display: grid; place-items: center;`;
const Thumb = styled.span`
  height: 225px; border: 1px solid #999; border-radius: 2px; background: linear-gradient(90deg, #fdfdfd, #dcdcdc);
  display: grid; place-items: center;
`;
const Tabs = styled.div`display: flex; align-items: flex-start; height: 22px;`;
const DockTab = styled.span<{ $w: number; $on?: boolean }>`
  width: ${(p) => p.$w}px;
  height: ${(p) => (p.$on ? 22 : 20)}px;
  padding-top: 1px;
  display: flex;
  align-items: center;
  justify-content: center;
  border: 1px solid #aaa;
  border-top: ${(p) => (p.$on ? "1px solid #f0f0f0" : "1px solid #b9b9b9")};
  border-left-width: ${(p) => (p.$on ? 1 : 0)}px;
  border-radius: 0 0 3px 3px;
  background: ${(p) => (p.$on ? "#f0f0f0" : "linear-gradient(#d9d9d9, #f2f2f2)")};
`;
const Canvas = styled.div`
  margin-left: 6px;
  flex: 1;
  background: #fff;
  border: 1px solid #bcbcbc;
  border-right: 0;
  border-radius: 0 0 0 3px;
  overflow: hidden;
`;
const StatusBar = styled.footer`height: 32px; flex: none; display: flex; align-items: center; padding: 2px 0 0 6px;`;
const Gap = styled.i<{ $w: number }>`width: ${(p) => p.$w}px; flex: none;`;
const Input = styled.div<{ $w?: number; $focus?: boolean; $dis?: boolean; $pl?: number; $end?: boolean }>`
  height: 20px;
  ${(p) => (p.$w ? css`width: ${p.$w}px; flex: none;` : css`flex: 1;`)}
  display: flex;
  align-items: center;
  overflow: hidden;
  padding-left: ${(p) => p.$pl ?? 3}px;
  ${(p) => p.$end && css`justify-content: flex-end; padding-right: 4px;`}
  border: ${(p) => (p.$focus ? "2px solid #1b78d0" : p.$dis ? "1px solid #909090" : "1px solid #b4b4b4")};
  border-radius: 2px;
  background: ${(p) => (p.$dis ? "#efefef" : "#fff")};
`;
const Combo = styled(Input)<{ $grad?: boolean }>`
  justify-content: space-between;
  ${(p) => p.$grad && css`background: linear-gradient(#fbfbfb, #dadada);`}
`;
const ComboEnd = styled.span`
  width: 16px;
  height: 100%;
  border-left: 1px solid #b4b4b4;
  background: linear-gradient(#fbfbfb, #dcdcdc);
  display: grid;
  place-items: center;
`;
const SpinEnd = styled(ComboEnd)`
  background: linear-gradient(#f4f4f4 0 9px, #b4b4b4 9px 10px, #f4f4f4 10px);
`;

const LEGEND: [string, string, number][] = [
  ["#9e0142", "Biserica Evanghelica in perioada 1350-1371", 251.5],
  ["#9e0142", "Capela funerara inainte de 1448", 185],
  ["#d53e4f", "Ferula actuala a bisericii (1470-1520)", 213],
  ["#f46d43", "Partea centrala a ferulei (capela Sf. Nicolae)", 251],
  ["#fdae61", "Peretii naveli boltite (1424 - 1430)", 195.5],
  ["#fdae61", "Planul primei biserici, a doua jum. a sec. XII", 249],
  ["#fee08b", "Porticul de nord (1509)", 131],
  ["#ffffbf", "Porticul de sud (1457)", 126],
  ["#e6f598", "Prelungirea nordica a transeptului in 1501", 240],
  ["#abdda4", "Ruina capelei Sf. Maria (1448)", 171],
  ["#abdda4", "Sacristia largita spre nord in 1471", 193],
  ["#66c2a5", "Sacristia veche", 87],
  ["#3288bd", "Transformari aduse bisericii in sec. XIX", 220],
  ["#5e4fa2", "Turnul bisericii (sec. XIII)", 138],
  ["#5e4fa2", "Turnul sudic (1520)", 109],
];
const LEGEND2: [string, string, number][] = [
  ["#9e0142", "Capela Sf. Iacob", 91.5], ["#fdae61", "Capela Sf. Ioan", 85.5], ["#abdda4", "Capela Sf. Ladislau", 108],
];
const SANS = '"DejaVu Sans", sans-serif';
const renderLegend = (rows: [string, string, number][]) =>
  rows.map(([c, t, w]) => (<LegendRow key={t}><Swatch $c={c} /><Label w={w} text={t} font={SANS} size={12.5} color="#111" /></LegendRow>));

const LayerTree = () => (
  <>
    <TreeMain>
      <LayerRow>
        <Expander /><Dash /><Check><Cross /></Check><Gap $w={6} />
        <svg width="18" height="18" viewBox="0 0 18 18"><path d="M0 0h18v18H0z" fill="#4b8ccb" /><path d="M0 0h6v5H0zM12 0h6v6h-6zM6 5h6v7H6zM0 12h5v6H0zM12 12h6v6h-6z" fill="#1d4a72" /></svg>
        <Gap $w={6} /><Under><Label w={19} text="dsf" bold size={13.5} /></Under>
      </LayerRow>
      <Legend>
        <GroupName $t={0} />
        <GroupName $t={-3}><Label w={130} text="Catedrala_Evanghelica" font={SANS} size={12.5} color="#111" /></GroupName>
        <Entries $t={4.5}>{renderLegend(LEGEND)}</Entries>
        <GroupName $t={5}><Label w={39.5} text="Capele" font={SANS} size={12.5} color="#111" /></GroupName>
        <Entries $t={5}>{renderLegend(LEGEND2)}</Entries>
        <GroupName $t={5}><Label w={89} text="Statuie_Teutsch" font={SANS} size={12.5} color="#111" /></GroupName>
        <Entries $t={6}>{renderLegend([["linear-gradient(150deg, #fff 45%, #222 46% 52%, #fff 53%)", "Statuie_Teutsch", 88]])}</Entries>
      </Legend>
    </TreeMain>
    <ScrollBar>
      <ScrollBtn><Caret $up $s={4} /></ScrollBtn>
      <Thumb><GripBar $w={10} $h={20} /></Thumb>
      <Push />
      <ScrollBtn><Caret $up $s={4} /></ScrollBtn>
      <ScrollBtn><Caret $s={4} /></ScrollBtn>
    </ScrollBar>
  </>
);

/* ---------- map ---------- */
const Wall = ({ d, c, w = 12, o = 5 }: { d: string; c: string; w?: number; o?: number }) => (
  <g fill="none" strokeLinejoin="miter">
    <path d={d} stroke="#111" strokeWidth={w + o} strokeLinecap="square" />
    <path d={d} stroke={c} strokeWidth={w} strokeLinecap="square" />
  </g>
);
const ORANGE_BLOCKS = [
  "462,205 515,205 513,232 490,234 490,242 462,240", "544,206 600,201 603,228 547,233", "632,198 690,194 692,222 635,227",
  "720,192 780,188 782,214 723,219", "787,210 814,208 817,258 803,262 803,280 790,283", "833,254 856,253 860,264 895,270 893,280 875,290 855,280 834,278",
  "457,245 467,245 467,272 490,271 494,328 470,332 457,325", "462,346 472,346 474,362 494,361 497,416 477,418 475,432 468,430",
  "882,314 905,314 903,335 888,358 862,360 864,348 875,335", "790,357 835,353 836,377 818,381 818,395 793,398",
  "482,450 490,440 546,433 548,457 480,463", "574,434 633,430 636,455 577,460", "664,429 720,424 722,449 667,454",
  "753,425 805,420 819,430 819,442 755,449", "454,205 462,205 462,232 454,232", "473,452 480,450 480,475 473,477",
];
const CityMap = () => (
  <svg width="721" height="574" viewBox="1999 131 721 574">
    <Wall c="#66c2a5" w={4.2} o={2} d="M2204 272L2193 266L2187 285L2192 288L2138 345L2133 370L2130 457L2113 503V530L2119 535L2367 648" />
    <Wall c="#66c2a5" w={4.2} o={2} d="M2204 271.500L2510 156Q2517 152 2521 158L2546 197L2567 213L2595 256L2608 302L2609 370L2402 642" />
    <path d="M2210 274l6 3-3 4-4-4zM2200 291l3 2 4-5 1 3-4 5-4-2z" fill="#66c2a5" stroke="#111" />
    <path d="M2511 198q12-2 12-7h4l3 5 10-1v8h-30zM2496 220l14-3 2 5-14 3zM2528 218h3v3h-3z" fill="#9e0142" stroke="#111" strokeWidth=".7" />
    <g transform="translate(2110 280) scale(.3333)">
      <Wall c="#d53e4f" w={9} d="M152 205L163 213L453 196M230 183V205M288 179V202M340 177V200M397 174V197M163 213L166 292" />
      <Wall c="#d53e4f" w={9} d="M162 516L178 505L470 488M174 425L178 505M241 508V525M309 504V520" />
      <Wall c="#f46d43" w={9} d="M131 301L328 289M166 301V342M140 424L336 410M172 382L174 424M228 291V307M288 287V303M234 405V421M293 402V418" />
      <g fill="#5e4fa2" stroke="#111" strokeWidth="3">
        <path d="M330 283L374 278V315L367 316V330L348 333L345 340L328 328ZM335 368L346 356L350 364L376 364V378L379 415L338 416ZM423 274L455 272V314L423 308ZM427 378L440 370L465 372V412L427 406Z" />
        <path d="M370 500H417V520L402 530V550H382V530L370 520Z" /><ellipse cx="392" cy="517" rx="12" ry="16" fill="#fff" />
      </g>
      <g fill="#3288bd" stroke="#111" strokeWidth="3">
        <path d="M452 166H469V186L520 187L536 198L468 202H452ZM588 182L626 181V156H640V180L688 176V152H702V174L745 171V187L565 193Z" />
        <path d="M472 479L541 473L522 486L485 490V512H472ZM582 474L755 455L760 470L714 474V496H698V476L655 480V498H640V481L600 483Z" />
      </g>
      <Wall c="#fdeaa0" w={3} o={4} d="M510 178V102H583V178" />
      <path d="M508 178L536 193 520 190ZM586 178L564 192 580 190ZM508 100h14l-12 14zM586 100h-14l12 14z" fill="#fee08b" stroke="#111" strokeWidth="3" />
      <Wall c="#ffffbf" w={6} d="M540 477L528 487V545L603 541V487L586 477M516 557L528 545M613 551L603 541" />
      {ORANGE_BLOCKS.map((p) => <polygon key={p} points={p} fill="#fdae61" stroke="#111" strokeWidth="3" />)}
      <Wall c="#e6f598" w={8} d="M726 64L743 78L748 134M743 78L859 73L856 130M859 73L877 52" />
      <Wall c="#abdda4" w={16} d="M917 120L1003 118L1015 102M924 104V118M1003 118V158L1100 158L1111 124M1100 158L1184 240L1210 230M1182 240V362L1210 372M1182 362L1103 442L1106 470M1103 445L952 455M986 455V486" />
      <Wall c="#66c2a5" w={10} d="M868 189L990 183L1008 160M992 183V240" />
      <Wall c="#9e0142" w={11} o={4} d="M726 130L748 147L862 139L880 126M750 147V184M857 140V261L1045 243M1005 230V243M1048 230L1045 243L1078 275L1088 270M1078 275L1080 318L1090 323M1080 318L1045 355L1052 366M1045 355L868 367M865 360V480L885 494M865 480L760 487L746 506M758 458V487M935 370V462M912 464H950M935 411H950M870 465H887M1000 358V378" />
      <circle cx="754" cy="259" r="7" fill="#9e0142" stroke="#111" /><circle cx="757" cy="381" r="7" fill="#9e0142" stroke="#111" />
      <Wall c="#fdae61" w={8} d="M1320 222H1260V278H1320" />
      <circle cx="1370" cy="250" r="53" fill="#fff" stroke="#111" strokeWidth="15" /><circle cx="1370" cy="250" r="53" fill="none" stroke="#fdae61" strokeWidth="9" />
    </g>
    <path d="M2283.500 486.500L2316 485L2317.500 515.500L2285 517.500ZM2304 486L2285 513M2317 500L2307 516" fill="none" stroke="#222" strokeWidth="1.100" />
    <Wall c="#c7e9c0" w={2.6} o={2} d="M2327 606L2332 597L2329 589M2332 597L2356 606L2374 615L2377 631L2370 637L2356 642L2317 623L2321 612M2356 606L2358 602M2374 615L2376 611M2338 634V639M2356 642L2353 647" />
    <Wall c="#a6d854" w={5} o={2} d="M2377 636L2362 658" />
    <Wall c="#a6d854" w={9} o={2} d="M2397 644L2383 667" />
    <path d="M2115 197H2563V219H2115Z" fill="#fff" />
    <text x="2117" y="214" fontSize="18" fill="#333" fontFamily="Open Sans, Noto Sans, sans-serif" textLength="443" lengthAdjust="spacingAndGlyphs">Powered by qgiscloud.com Free (private use) by Sourcepole AG Zürich</text>
  </svg>
);

const SIDE: [string, boolean][] = [["vadd", false], ["radd", false], ["feather", false], ["pg", true], ["globe", true], ["globe2", false], ["globe3", true], ["comma", false], ["vbox", false], ["vstar", true]];
const WinButtons = () => (
  <Controls $gap={39} $up={4}>
    <svg width="10" height="11"><path d="M0 5.500h10" stroke="#888" /></svg>
    <svg width="10" height="11" fill="none" stroke="#888"><path d="M.5 2.500h7v8h-7zM2.500 2.500v-2h7v8h-2" /></svg>
    <svg width="10" height="11"><path d="M0 .5l10 10M10 .5l-10 10" stroke="#888" /></svg>
  </Controls>
);

function QgisWindow({ right }: { right?: boolean }) {
  const off = right ? [] : ["z11", "zlay", "identify", "hist", "hist2"];
  return (
    <Win $right={right}>
      <TitleBar>
        <Icon name="logo" size={13} h={16} />
        <Label w={98} text="QGIS 2.18.9 - dsf" font={TITLE_FONT} size={13.5} color="#8f8f8f" />
        <Push /><WinButtons />
      </TitleBar>
      <MenuBar>{MENU.map(([t, w, s]) => (<MenuItem key={t} $slot={s}><Label w={w} text={t} /></MenuItem>))}</MenuBar>
      <ToolRow>{renderTools(ROW1, off)}</ToolRow>
      <ToolRow $last>{renderTools(ROW2, off)}</ToolRow>
      <Body>
        <SideBar>
          <SideGrip><GripBar $w={41} /></SideGrip>
          {SIDE.map(([n, a]) => (<SideItem key={n}><Icon name={n} />{a && <Caret />}</SideItem>))}
          <SideItem $h={8} />
          <SideGrip><GripBar $w={41} /></SideGrip>
          <SideItem $in><Icon name="topo" /></SideItem>
          <SideItem $in><Icon name="geom" /></SideItem>
        </SideBar>
        <Dock>
          <DockHead>
            <GripBar />
            <Label w={56} text="Layers Panel" size={11.5} />
            <GripBar />
            <DockBtns>
              <svg width="13" height="14" fill="none" stroke="#333"><rect x=".5" y=".5" width="12" height="13" rx="2" /><path d="M5.500 3.500h5v5h-5zM3 6v4.500h5" stroke="#000" strokeWidth="1.200" /></svg>
              <svg width="14" height="14" fill="none" stroke="#333"><rect x=".5" y=".5" width="13" height="13" rx="2" /><path d="M4 4l6 6M10 4l-6 6" stroke="#000" strokeWidth="1.800" /></svg>
            </DockBtns>
          </DockHead>
          <DockTools>
            {([["brush", 27], ["group", 27], ["eye", 27], ["funnel", 27], ["epsf", 27], ["-", 12], ["down", 27], ["up", 27], ["remove", 27]] as Tool[]).map(([n, w]) => (
              <Slot key={n} $w={w}>{n === "-" ? <Caret $c="#999" /> : <Icon name={n} size={15} />}</Slot>
            ))}
          </DockTools>
          <Tree>{right && <LayerTree />}</Tree>
          <Tabs>
            <DockTab $on $w={92.5}><Label w={68} text="Layers Panel" /></DockTab>
            <DockTab $w={104}><Label w={78} text="Browser Panel" /></DockTab>
            <DockTab $w={86}><Label w={62} text="QGIS Cloud" /></DockTab>
          </Tabs>
        </Dock>
        <Canvas>{right && <CityMap />}</Canvas>
      </Body>
      <StatusBar>
        <Label w={147} text="Updated local data sources" /><Gap $w={288} />
        <Label w={58} text="Coordinate" /><Gap $w={4} />
        <Input $w={126.5} $pl={0} $end><Label w={122} text="2688427.4,5748027.6" /></Input><Gap $w={6} />
        <Icon name="mouse" size={16} /><Gap $w={14.5} />
        <Label w={27} text="Scale" /><Gap $w={4} />
        <Combo $w={96.5}><Label w={43} text="1:1,468" /><ComboEnd><Caret $s={4} /></ComboEnd></Combo><Gap $w={7} />
        <Icon name="lock" size={14} h={17} /><Gap $w={15} />
        <Label w={48} text="Magnifier" /><Gap $w={3} />
        <Combo $w={80.5}><Label w={33} text="100%" /><SpinEnd><Caret $up $s={3.5} /><Caret $s={3.5} /></SpinEnd></Combo><Gap $w={9.5} />
        <Label w={46} text="Rotation" /><Gap $w={9} />
        <Combo $w={80}><Label w={18} text="0.0" /><SpinEnd><Caret $up $s={3.5} /><Caret $s={3.5} /></SpinEnd></Combo><Gap $w={8} />
        <Check $size={13}><Cross /></Check><Gap $w={5} /><Label w={39} text="Render" /><Gap $w={18} />
        <Icon name="crs" size={17} /><Gap $w={4} /><Label w={98} text="EPSG:3857 (OTF)" /><Gap $w={24} />
        <Icon name="chat" size={18} />
      </StatusBar>
    </Win>
  );
}

/* ---------- dialogs ---------- */
const Dialog = styled.div<{ $x: number; $y: number; $w: number; $h: number; $c: string }>`
  position: absolute;
  left: ${(p) => p.$x}px;
  top: ${(p) => p.$y}px;
  width: ${(p) => p.$w}px;
  height: ${(p) => p.$h}px;
  border: 1px solid ${(p) => p.$c};
  background: #f0f0f0;
  display: flex;
  flex-direction: column;
`;
const DialogTitle = styled.header<{ $color: string }>`
  height: 32px;
  flex: none;
  display: flex;
  align-items: center;
  gap: 7px;
  padding: 0 20px 0 9px;
  background: #fff;
  color: ${(p) => p.$color};
`;
const Mark = styled.span`font: 15px ${TITLE_FONT};`;
const Panel = styled.div<{ $h: number; $t?: number; $m?: number; $c?: string; $bg?: string }>`
  height: ${(p) => p.$h}px;
  flex: none;
  margin: ${(p) => p.$t ?? 0}px ${(p) => p.$m ?? 0}px 0;
  padding: 0 12px;
  border: 1px solid ${(p) => p.$c ?? "#b8b8b8"};
  border-radius: 3px;
  background: ${(p) => p.$bg ?? "transparent"};
`;
const GroupTitle = styled.div`
  width: max-content;
  height: 16px;
  margin: -8px 0 0 -7px;
  padding: 0 3px;
  background: #f0f0f0;
`;
const TabStrip = styled.div<{ $t: number; $m?: number }>`
  height: 20px;
  flex: none;
  display: flex;
  align-items: flex-end;
  margin: ${(p) => p.$t}px ${(p) => p.$m ?? 0}px -1px;
  padding-top: 0;
`;
const Tab = styled.span<{ $w: number; $on?: boolean }>`
  position: relative;
  width: ${(p) => p.$w}px;
  height: ${(p) => (p.$on ? 21 : 18)}px;
  flex: none;
  display: flex;
  align-items: center;
  justify-content: center;
  border: 1px solid #b0b0b0;
  border-bottom: ${(p) => (p.$on ? "0" : "1px solid #b0b0b0")};
  border-radius: 3px 3px 0 0;
  background: ${(p) => (p.$on ? "#f0f0f0" : "linear-gradient(#f2f2f2, #d9d9d9)")};
`;
const Row = styled.div<{ $t: number; $h?: number; $l?: number; $end?: boolean; $m?: number; $gap?: number }>`
  display: flex;
  flex: none;
  align-items: center;
  height: ${(p) => p.$h ?? 20}px;
  margin: ${(p) => p.$t}px ${(p) => p.$m ?? 0}px 0;
  padding-left: ${(p) => p.$l ?? 0}px;
  gap: ${(p) => p.$gap ?? 0}px;
  justify-content: ${(p) => (p.$end ? "flex-end" : "flex-start")};
`;
const Button = styled.span<{ $w: number; $dark?: boolean }>`
  width: ${(p) => p.$w}px;
  height: 25px;
  flex: none;
  display: flex;
  align-items: center;
  justify-content: center;
  border: 1px solid ${(p) => (p.$dark ? "#777" : "#b4b4b4")};
  border-radius: 3px;
  background: linear-gradient(#fcfcfc, #dadada);
`;
const Cell = styled.span<{ $w: number }>`width: ${(p) => p.$w}px; flex: none; white-space: nowrap;`;
const ListHead = styled.div`
  height: 22px;
  margin: 1px -11px;
  padding-left: 3px;
  display: flex;
  align-items: center;
  border: 1px solid #8a8a8a;
  background: linear-gradient(#fbfbfb, #dedede);
`;
const Caretline = styled.i`width: 1px; height: 14px; margin-left: 1px; background: #000;`;
const Corner = styled.svg`position: absolute; right: 0; bottom: 0;`;
const RedBox = styled.div<{ $x: number; $y: number; $w: number; $h: number }>`
  position: absolute;
  left: ${(p) => p.$x}px;
  top: ${(p) => p.$y}px;
  width: ${(p) => p.$w}px;
  height: ${(p) => p.$h}px;
  border: 3px solid #f01c24;
`;
const SizeGrip = () => (<Corner width="12" height="12"><path d="M0 12L12 0M4 12L12 4M8 12L12 8" stroke="#999" /></Corner>);
const XMark = () => (<svg width="11" height="11"><path d="M.5.5l10 10M10.500.5l-10 10" stroke="currentColor" /></svg>);

const ServerDialog = () => (
  <Dialog $x={296} $y={80} $w={775} $h={573} $c="#a0a0a0">
    <DialogTitle $color="#999">
      <Icon name="logo" size={13} h={16} />
      <Label w={207} text="Add Layer(s) from a WM(T)S Server" font={TITLE_FONT} size={13.5} />
      <Push /><Controls $gap={40}><Mark>?</Mark><XMark /></Controls>
    </DialogTitle>
    <TabStrip $t={11} $m={11}>
      <Tab $on $w={59}><Label w={34} text="Layers" /></Tab>
      <Tab $w={90}><Label w={63} text="Layer Order" color="#777" /></Tab>
    </TabStrip>
    <Panel $h={420} $m={11}>
      <Row $t={12}><Combo $grad><span /><ComboEnd><Caret $s={4} /></ComboEnd></Combo></Row>
      <Row $t={6} $h={25} $gap={6}>
        <Button $w={82} $dark><Label w={46} text="Connect" color="#888" /></Button>
        <Button $w={82}><Label w={24} text="New" /></Button>
        <Push />
        <Button $w={113}><Label w={104} text="Add default servers" /></Button>
      </Row>
      <Panel $t={6} $h={119} $bg="#fff"><ListHead><Label w={12} text="ID" /></ListHead></Panel>
      <Panel $t={14} $h={57} $c="#909090"><GroupTitle><Label bold w={98} text="Image encoding" color="#333" /></GroupTitle></Panel>
      <Panel $t={13} $h={135}>
        <GroupTitle><Label bold w={49} text="Options" color="#333" /></GroupTitle>
        <Row $t={12}><Cell $w={180}><Label w={41} text="Tile size" /></Cell><Input /></Row>
        <Row $t={6}><Cell $w={180}><Label w={166} text="Feature limit for GetFeatureInfo" /></Cell><Input $dis /></Row>
        <Row $t={5} $h={25}><Cell $w={180}><Label w={44} text="WGS 84" /></Cell><Push /><Button $dark $w={200} /></Row>
        <Row $t={8} $h={14} $gap={5}><Check /><Label w={160} text="Use contextual WMS Legend" /></Row>
      </Panel>
    </Panel>
    <Row $t={8} $m={11}><Cell $w={69}><Label w={63} text="Layer name" /></Cell><Input /></Row>
    <Row $t={5} $h={25} $m={11} $gap={10} $end>
      <Button $w={82}><Label w={33} text="Close" /></Button><Button $w={82}><Label w={24} text="Help" /></Button>
    </Row>
    <Row $t={5} $h={16} $m={11}><Label w={33} text="Ready" /></Row>
    <SizeGrip />
  </Dialog>
);

const CHECKS: [string, number][] = [
  ["Ignore GetMap/GetTile URI reported in capabilities", 275], ["Ignore GetFeatureInfo URI reported in capabilities", 273],
  ["Ignore axis orientation (WMS 1.3/WMTS)", 227], ["Invert axis orientation", 118], ["Smooth pixmap transform", 141],
];
const ConnectionDialog = () => (
  <Dialog $x={419} $y={103} $w={528} $h={526} $c="#1883d7">
    <DialogTitle $color="#000">
      <Icon name="logo" size={13} h={16} />
      <Label w={178} text="Create a new WMS connection" font={TITLE_FONT} size={13.5} />
      <Push /><Controls $gap={40}><Mark>?</Mark><XMark /></Controls>
    </DialogTitle>
    <Panel $h={432} $t={18} $m={11}>
      <GroupTitle><Label bold w={114} text="Connection details" color="#333" /></GroupTitle>
      <Row $t={14} $l={5}><Cell $w={60}><Label w={31} text="Name" /></Cell><Input><Label w={62} text="QGIS Cloud" /></Input></Row>
      <Row $t={10} $l={5}>
        <Cell $w={60}><Label w={21} text="URL" /></Cell>
        <Input $focus $pl={2}><Label w={277} text="http://wms.qgiscloud.com/mihneacristianpopa/dsf/" /><Caretline /></Input>
      </Row>
      <TabStrip $t={9}>
        <Tab $on $w={105}><Label w={81} text="Authentication" /></Tab>
        <Tab $w={103}><Label w={77} text="Configurations" /></Tab>
      </TabStrip>
      <Panel $h={121}>
        <Row $t={13} $h={13.5}><Label w={412} text="If the service requires basic authentication, enter a user name and optional" /></Row>
        <Row $t={0} $h={13.5}><Label w={51} text="password" /></Row>
        <Row $t={6}><Cell $w={64}><Label w={57} text="User name" /></Cell><Input /></Row>
        <Row $t={6}><Cell $w={64}><Label w={51} text="Password" /></Cell><Input /></Row>
      </Panel>
      <Row $t={7}><Cell $w={65}><Label w={40} text="Referer" /></Cell><Input /></Row>
      <Row $t={6}><Cell $w={65}><Label w={52} text="DPI-Mode" /></Cell><Combo $grad><Label w={11} text="all" /><ComboEnd><Caret $s={4} /></ComboEnd></Combo></Row>
      <Row $t={6} $h={16}><Label w={38} text="Version" /></Row>
      {CHECKS.map(([t, w], i) => (<Row key={t} $t={i ? 11 : 6} $h={14} $gap={5}><Check /><Label w={w} text={t} /></Row>))}
    </Panel>
    <Row $t={6} $h={25} $m={11} $gap={11} $end>
      <Button $dark $w={81}><Label w={16} text="OK" /></Button>
      <Button $w={81}><Label w={35} text="Cancel" /></Button>
      <Button $w={81}><Label w={24} text="Help" /></Button>
    </Row>
    <SizeGrip />
  </Dialog>
);

export default function App() {
  return (
    <Screen>
      <Global />
      <Half>
        <QgisWindow />
        <ServerDialog />
        <ConnectionDialog />
        <RedBox $x={424} $y={138} $w={535} $h={131} />
        <RedBox $x={656} $y={574} $w={107} $h={61} />
      </Half>
      <Half $right>
        <QgisWindow right />
      </Half>
    </Screen>
  );
}
